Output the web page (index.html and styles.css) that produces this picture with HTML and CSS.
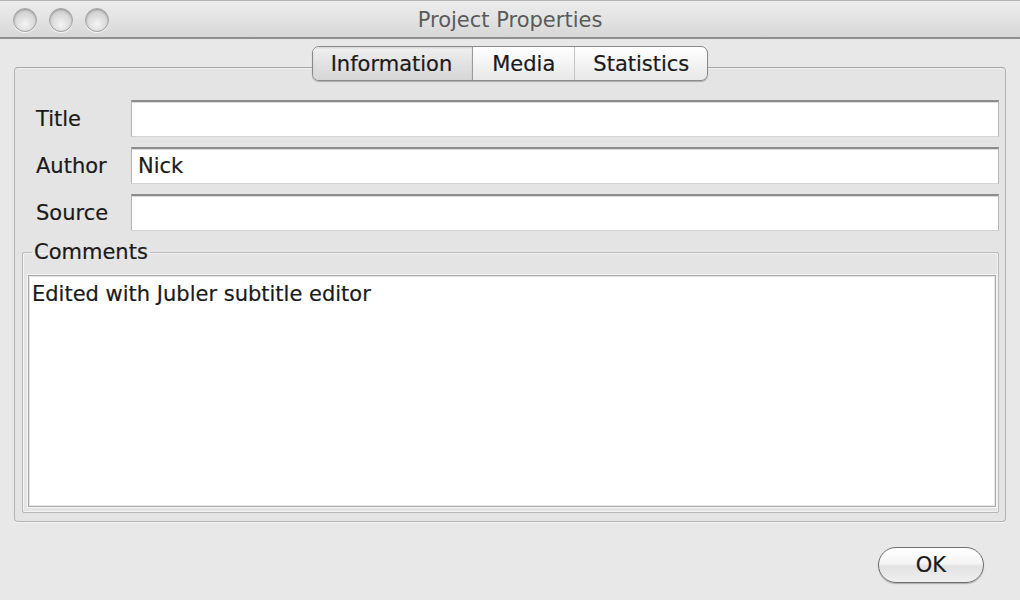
FILE: index.html
```html
<!DOCTYPE html>
<html>
<head>
<meta charset="utf-8">
<title>Project Properties</title>
<link rel="stylesheet" href="styles.css">
</head>
<body>
<div class="window">
  <div class="titlebar">
    <div class="lights">
      <span class="light"></span>
      <span class="light"></span>
      <span class="light"></span>
    </div>
    <div class="title">Project Properties</div>
  </div>
  <div class="content">
    <div class="tabs">
      <div class="tab selected">Information</div>
      <div class="tab media">Media</div>
      <div class="tab stats">Statistics</div>
    </div>
    <div class="panel">
      <div class="form">
        <div class="label">Title</div>
        <div class="field"></div>
        <div class="label">Author</div>
        <div class="field">Nick</div>
        <div class="label">Source</div>
        <div class="field"></div>
      </div>
      <fieldset class="comments">
        <legend>Comments</legend>
        <div class="textarea">Edited with Jubler subtitle editor</div>
      </fieldset>
    </div>
    <div class="footer">
      <div class="button">OK</div>
    </div>
  </div>
</div>
</body>
</html>
```
FILE: styles.css
```css
html, body {
  margin: 0;
  padding: 0;
  background: #e8e8e8;
}
body {
  font-family: "DejaVu Sans", "Liberation Sans", sans-serif;
  color: #1a1a1a;
  -webkit-text-stroke: 0.2px currentColor;
}
.window {
  width: 1020px;
  height: 600px;
  display: flex;
  flex-direction: column;
  background: #e8e8e8;
  overflow: hidden;
}
.titlebar {
  height: 36px;
  flex: none;
  display: flex;
  align-items: center;
  position: relative;
  border-top: 1px solid #b5b5b5;
  border-bottom: 2px solid #8f8f8f;
  background: linear-gradient(#ececec, #e3e3e3 50%, #d6d6d6);
}
.lights {
  display: flex;
  gap: 12px;
  padding-left: 13px;
  margin-top: 1px;
}
.light {
  width: 22px;
  height: 22px;
  border-radius: 50%;
  border: 1px solid #a4a4a4;
  background: radial-gradient(circle at 50% 70%, #f4f4f4 0%, #d8d8d8 55%, #bcbcbc 100%);
  box-shadow: inset 0 1px 2px rgba(0,0,0,0.25), 0 1px 0 rgba(255,255,255,0.7);
}
.title {
  position: absolute;
  left: 0;
  right: 0;
  top: 7px;
  text-align: center;
  font-size: 21px;
  color: #5a5a5a;
  -webkit-text-stroke: 0;
}
.content {
  flex: 1;
  display: flex;
  flex-direction: column;
  padding: 7px 14px 0 14px;
}
.tabs {
  align-self: center;
  display: flex;
  height: 33px;
  border: 1px solid #8a8a8a;
  border-radius: 7px;
  background: linear-gradient(#ffffff, #f3f3f3 50%, #e8e8e8);
  box-shadow: 0 1px 1px rgba(0,0,0,0.25);
  margin-bottom: -14px;
  position: relative;
  z-index: 1;
  overflow: hidden;
  font-size: 21px;
}
.tab {
  display: flex;
  align-items: center;
  justify-content: center;
  padding: 0 19px;
  border-left: 1px solid #c4c4c4;
}
.tab:first-child {
  border-left: none;
  padding: 0 20px 0 18px;
}
.tab.stats {
  padding: 0 18px 0 18px;
}
.tab.selected {
  background: linear-gradient(#f0f0f0, #e2e2e2 50%, #d6d6d6);
  border-right: 1px solid #9a9a9a;
  box-shadow: inset 0 1px 2px rgba(0,0,0,0.12);
}
.tab.selected + .tab {
  border-left: none;
}
.panel {
  border: 1px solid #b4b4b4;
  border-top-color: #a6a6a6;
  border-radius: 4px;
  background: #e4e4e4;
  box-shadow: inset 0 1px 0 #f0f0f0, 0 1px 0 #f4f4f4;
  padding: 32px 6px 8px 7px;
  display: flex;
  flex-direction: column;
}
.form {
  display: grid;
  grid-template-columns: 109px 1fr;
  grid-auto-rows: 37px;
  row-gap: 10px;
  margin-bottom: 9px;
}
.label {
  display: flex;
  align-items: center;
  padding-left: 14px;
  font-size: 21px;
}
.field {
  background: #ffffff;
  border-top: 2px solid #8c8c8c;
  border-left: 1px solid #b4b4b4;
  border-right: 1px solid #b4b4b4;
  border-bottom: 1px solid #d4d4d4;
  box-shadow: inset 0 1px 0 #dcdcdc;
  display: flex;
  align-items: center;
  padding-left: 6px;
  font-size: 21px;
}
.comments {
  margin: 0;
  border: 1px solid #b8b8b8;
  border-radius: 2px;
  box-shadow: inset 0 0 0 1px #f3f3f3;
  padding: 11px 2px 5px 5px;
}
.comments legend {
  margin-left: 4px;
  padding: 0 2px;
  font-size: 21px;
  line-height: 24px;
}
.textarea {
  height: 218px;
  background: #ffffff;
  border: 1px solid #a9a9a9;
  box-shadow: 0 0 0 1px #f6f6f6, inset 0 0 0 1px #e6e6e6;
  padding: 6px 3px;
  font-size: 21px;
  line-height: 24px;
}
.footer {
  flex: 1;
  display: flex;
  justify-content: flex-end;
  align-items: flex-start;
  padding: 25px 22px 0 0;
}
.button {
  width: 104px;
  height: 34px;
  border: 1px solid #6e6e6e;
  border-radius: 18px;
  background: linear-gradient(#ffffff, #f4f4f4 45%, #e2e2e2 55%, #f0f0f0);
  box-shadow: 0 1px 1px rgba(0,0,0,0.25);
  display: flex;
  align-items: center;
  justify-content: center;
  font-size: 21px;
}
```
